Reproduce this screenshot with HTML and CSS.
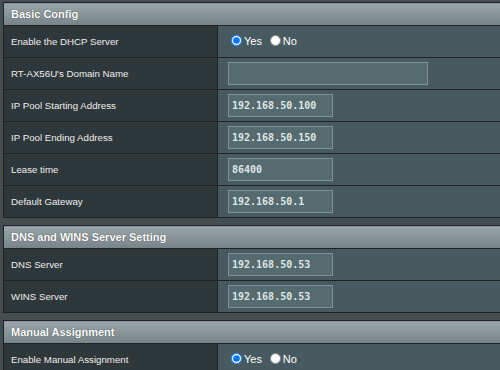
FILE: index.html
```html
<!DOCTYPE html>
<html>

<head>
    <title>LAN - DHCP Server</title>
    <meta name="viewport" content="width=device-width, initial-scale=1">
    <link rel="stylesheet" href="styles.css">
</head>

<body>
    <div id="content">
        <table class="form-table">
            <thead>
                <tr><td colspan="2">Basic Config</td></tr>
            </thead>
            <tbody>
                <tr>
                    <th>Enable the DHCP Server</th>
                    <td>
                        <label class="radio"><input type="radio" name="dhcp_enable" checked>Yes</label>
                        <label class="radio"><input type="radio" name="dhcp_enable">No</label>
                    </td>
                </tr>
                <tr>
                    <th>RT-AX56U's Domain Name</th>
                    <td><input type="text" class="input-wide" value=""></td>
                </tr>
                <tr>
                    <th>IP Pool Starting Address</th>
                    <td><input type="text" class="input-ip" value="192.168.50.100"></td>
                </tr>
                <tr>
                    <th>IP Pool Ending Address</th>
                    <td><input type="text" class="input-ip" value="192.168.50.150"></td>
                </tr>
                <tr>
                    <th>Lease time</th>
                    <td><input type="text" class="input-ip" value="86400"></td>
                </tr>
                <tr>
                    <th>Default Gateway</th>
                    <td><input type="text" class="input-ip" value="192.168.50.1"></td>
                </tr>
            </tbody>
        </table>

        <table class="form-table">
            <thead>
                <tr><td colspan="2">DNS and WINS Server Setting</td></tr>
            </thead>
            <tbody>
                <tr>
                    <th>DNS Server</th>
                    <td><input type="text" class="input-ip" value="192.168.50.53"></td>
                </tr>
                <tr>
                    <th>WINS Server</th>
                    <td><input type="text" class="input-ip" value="192.168.50.53"></td>
                </tr>
            </tbody>
        </table>

        <table class="form-table">
            <thead>
                <tr><td colspan="2">Manual Assignment</td></tr>
            </thead>
            <tbody>
                <tr>
                    <th>Enable Manual Assignment</th>
                    <td>
                        <label class="radio"><input type="radio" name="manual_enable" checked>Yes</label>
                        <label class="radio"><input type="radio" name="manual_enable">No</label>
                    </td>
                </tr>
            </tbody>
        </table>
    </div>
</body>

</html>
```

FILE: styles.css
```css
body {
    margin: 0;
    padding: 0;
    background-color: #444d50;
    font-family: "Liberation Sans", Arial, sans-serif;
    overflow: hidden;
}

#content {
    padding: 2px 0 0 3px;
    overflow: hidden;
}

.form-table {
    width: 100%;
    border-collapse: collapse;
    margin-bottom: 7px;
}

.form-table thead td {
    height: 22px;
    padding: 0 0 0 7px;
    border: 1px solid #222;
    border-right: none;
    background: linear-gradient(to bottom, #9aa6aa 0%, #768387 100%);
    color: #fff;
    font-size: 11px;
    font-weight: bold;
    text-align: left;
    text-shadow: 0 0 1px #333;
}

.form-table th {
    width: 206px;
    height: 31px;
    padding: 0 0 0 7px;
    border: 1px solid #222;
    background-color: #2e373a;
    color: #eeeeee;
    font-size: 9.7px;
    font-weight: normal;
    text-align: left;
}

.form-table tbody td {
    height: 31px;
    padding: 0 0 0 10px;
    border: 1px solid #222;
    border-right: none;
    background-color: #475a5f;
    color: #fff;
    font-size: 10px;
}

.form-table input[type="text"] {
    box-sizing: border-box;
    height: 23px;
    padding: 0 0 0 3px;
    border: 1px solid #7f9094;
    background-color: #566b70;
    color: #dfe5e6;
    font-family: "DejaVu Sans Mono", monospace;
    font-size: 10px;
    font-weight: bold;
    outline: none;
}

.input-ip {
    width: 105px;
}

.input-wide {
    width: 200px;
}

.radio {
    display: inline-flex;
    align-items: center;
    font-size: 11px;
    margin-right: 2px;
}

.radio input {
    width: 11px;
    height: 11px;
    margin: 0 2px 0 3px;
}
```
